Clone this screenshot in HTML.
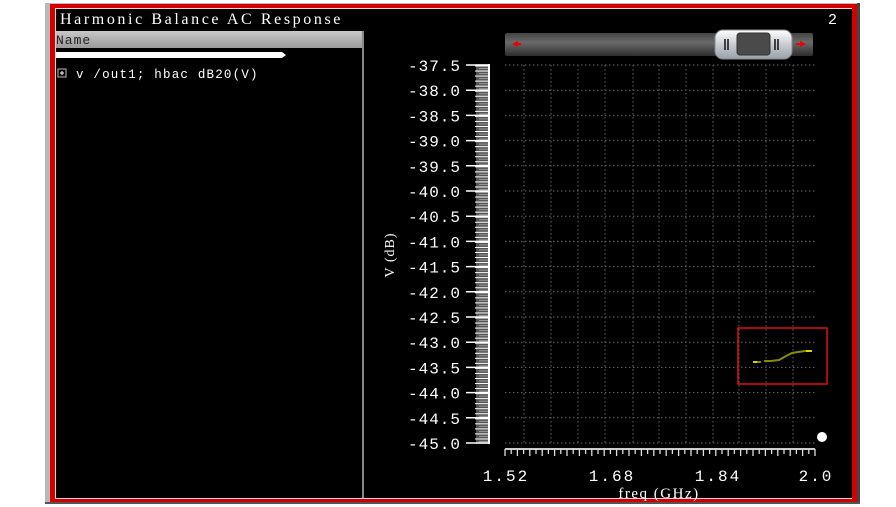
<!DOCTYPE html>
<html><head><meta charset="utf-8"><style>
html,body{margin:0;padding:0;background:#fff;width:896px;height:507px;overflow:hidden}
svg{display:block}
text{font-family:"Liberation Mono",monospace;fill:#fff}
</style></head><body>
<svg id="s" width="896" height="507" viewBox="0 0 896 507">
<rect x="0" y="0" width="896" height="507" fill="#fff"/>
<rect x="45" y="3" width="815" height="500" fill="#b9b9b9"/>
<rect x="50" y="4" width="807" height="498" fill="#d40000"/>
<rect x="55" y="8" width="797" height="491" fill="#f0d0d0"/>
<rect x="56" y="9" width="796" height="489" fill="#000"/>
<rect x="857" y="3" width="3" height="500" fill="#444"/>
<rect x="45" y="502" width="815" height="2" fill="#555"/>
<text x="60" y="24" font-size="16" letter-spacing="2.6" style="font-family:'Liberation Serif',serif">Harmonic Balance AC Response</text>
<text x="828" y="24" font-size="15">2</text>
<defs>
<linearGradient id="hd" x1="0" y1="0" x2="0" y2="1"><stop offset="0" stop-color="#c8c8c8"/><stop offset="1" stop-color="#9a9a9a"/></linearGradient>
<linearGradient id="sb" x1="0" y1="0" x2="0" y2="1"><stop offset="0" stop-color="#444"/><stop offset=".4" stop-color="#6a6a6a"/><stop offset="1" stop-color="#2e2e2e"/></linearGradient>
<linearGradient id="th" x1="0" y1="0" x2="0" y2="1"><stop offset="0" stop-color="#fff"/><stop offset=".5" stop-color="#c8ccd2"/><stop offset="1" stop-color="#9aa0a8"/></linearGradient>
</defs>
<rect x="56" y="31" width="306" height="17" fill="url(#hd)"/>
<text x="56" y="44" font-size="13" style="fill:#222" letter-spacing="1">Name</text>
<rect x="362" y="31" width="2" height="467" fill="#888"/>
<path d="M56 52 H282 L286 55 L282 58 H56 Z" fill="#fff"/>
<rect x="58" y="69" width="8" height="8" fill="none" stroke="#bbb" stroke-width="1"/>
<path d="M60 73 H64 M62 71 V75" stroke="#fff"/>
<text x="76" y="78" font-size="12.5" letter-spacing="1.2">v /out1; hbac dB20(V)</text>
<rect x="505" y="33" width="308" height="23" rx="2" fill="url(#sb)"/>
<path d="M512 44 L518 41 V47 Z" fill="#e00"/><rect x="516" y="43" width="5" height="2" fill="#e00"/>
<path d="M806 44 L800 41 V47 Z" fill="#e00"/><rect x="796" y="43" width="5" height="2" fill="#e00"/>
<rect x="715" y="30" width="77" height="29" rx="8" fill="url(#th)" stroke="#888"/>
<rect x="737" y="33" width="33" height="22" rx="3" fill="#4a4a4a" stroke="#333"/>
<path d="M725 39 V50 M728 39 V50 M775 39 V50 M778 39 V50" stroke="#111" stroke-width="1.5"/>
<g id="grid" stroke="#666" stroke-width="1" stroke-dasharray="1.5 2.5"></g>
<g id="ruler"></g>
<rect x="738" y="328" width="89" height="56" fill="none" stroke="#e01010" stroke-width="1.5"/>
<path d="M753 362 L761 362 M764 361 L771 361 L779 360 L786 356 L792 353 L798 352 L805 351 L812 351" stroke="#8a8a00" stroke-width="2" fill="none"/>
<path d="M753 362 H757 M806 351 H812" stroke="#ee0" stroke-width="1.5"/>
<circle cx="822" cy="437" r="5" fill="#fff"/>
<g id="yl" font-size="16" text-anchor="end" letter-spacing="1"></g>
<text transform="translate(394,255) rotate(-90)" font-size="14" text-anchor="middle" style="font-family:'Liberation Serif',serif" letter-spacing="1">V (dB)</text>
<g font-size="16" text-anchor="middle" letter-spacing="2">
<text x="506" y="481">1.52</text><text x="612" y="481">1.68</text><text x="718" y="481">1.84</text><text x="816" y="481">2.0</text>
</g>
<text x="659" y="498" font-size="15" text-anchor="middle" style="font-family:'Liberation Serif',serif" letter-spacing="1.5">freq (GHz)</text>
</svg>
<script>
var NS="http://www.w3.org/2000/svg";
function el(p,t,a){var e=document.createElementNS(NS,t);for(var k in a)e.setAttribute(k,a[k]);p.appendChild(e);return e;}
var g=document.getElementById('grid'),r=document.getElementById('ruler'),yl=document.getElementById('yl');
var xs=[524,551,578,605,633,659,686,713,739,766,793];
xs.forEach(function(x){el(g,'line',{x1:x,y1:65,x2:x,y2:443});});
for(var i=0;i<16;i++){var y=65+i*25.2;
 el(g,'line',{x1:505,y1:y,x2:815,y2:y});
 var t=el(yl,'text',{x:461,y:y+6});t.textContent=(-37.5-i*0.5).toFixed(1);
}
el(r,'rect',{x:476,y:64,width:12,height:380,fill:'#555'});
for(var y=66;y<443;y+=2.52){var k=Math.round((y-65)/2.52)%2;
 el(r,'line',{x1:k?479:475,y1:y,x2:489,y2:y,stroke:k?'#999':'#fff','stroke-width':1});}
for(var i=0;i<16;i++){var y=65+i*25.2;el(r,'line',{x1:466,y1:y,x2:489,y2:y,stroke:'#fff','stroke-width':1.5});}
el(r,'line',{x1:489,y1:64,x2:489,y2:444,stroke:'#fff','stroke-width':2});
el(r,'line',{x1:505,y1:449,x2:815,y2:449,stroke:'#ccc','stroke-width':2});
for(var x=505,j=0;x<=816;x+=6.2,j++){el(r,'line',{x1:x,y1:449,x2:x,y2:j%2?454:456,stroke:'#ddd','stroke-width':1.3});}
</script>
</body></html>
